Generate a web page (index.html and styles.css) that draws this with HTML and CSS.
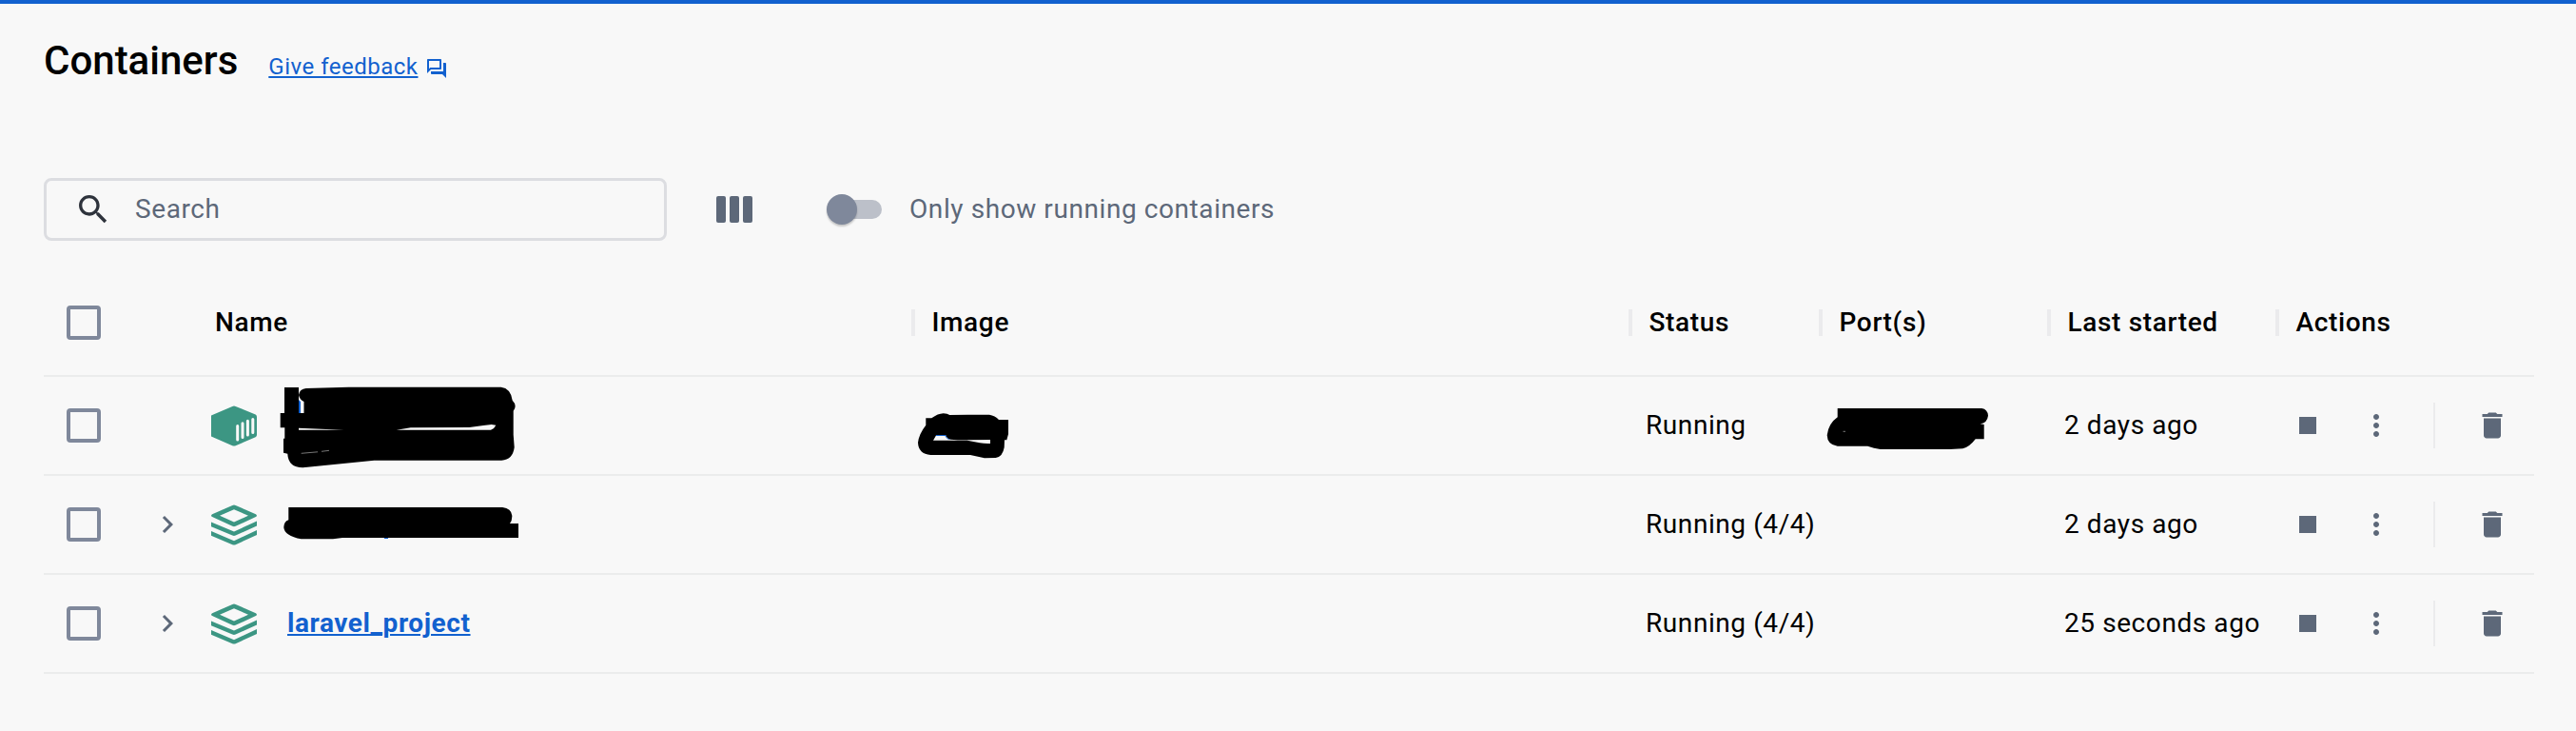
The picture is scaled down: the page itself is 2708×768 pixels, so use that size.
FILE: index.html
```html
<!DOCTYPE html>
<html lang="en">
<head>
    <meta charset="UTF-8">
    <title>Containers</title>
    <link rel="stylesheet" href="styles.css">
</head>
<body>

    <svg class="defs">
        <symbol id="stack" viewBox="0 0 48 43">
            <path fill-rule="evenodd" d="M22.3.9Q24 .1 25.7.9L46.9 10.3Q49 11.7 46.9 13.1L25.7 22.8Q24 23.6 22.3 22.8L1.1 13.1Q-1 11.7 1.1 10.3ZM24 5.2L9 11.7L24 18.6L39 11.7Z"/>
            <path d="M0 18.4L24 28.6L48 17.4V22.4L25.7 32.6Q24 33.4 22.3 32.6L0 23.2Z"/>
            <path d="M0 28L24 38.2L48 27V32L25.7 42.2Q24 43 22.3 42.2L0 32.8Z"/>
        </symbol>
        <symbol id="chevron" viewBox="0 0 24 24"><path d="M10 6 8.59 7.41 13.17 12l-4.58 4.59L10 18l6-6z"/></symbol>
        <symbol id="stop" viewBox="0 0 24 24"><path d="M6 6h12v12H6z"/></symbol>
        <symbol id="more" viewBox="0 0 24 24"><path d="M12 8c1.1 0 2-.9 2-2s-.9-2-2-2-2 .9-2 2 .9 2 2 2zm0 2c-1.1 0-2 .9-2 2s.9 2 2 2 2-.9 2-2-.9-2-2-2zm0 6c-1.1 0-2 .9-2 2s.9 2 2 2 2-.9 2-2-.9-2-2-2z"/></symbol>
        <symbol id="trash" viewBox="0 0 24 24"><path d="M6 19c0 1.1.9 2 2 2h8c1.1 0 2-.9 2-2V7H6v12zM19 4h-3.5l-1-1h-5l-1 1H5v2h14V4z"/></symbol>
    </svg>

    <div class="page">
        <div class="title">
            <h1>Containers</h1>
            <a class="feedback" href="#">Give feedback</a>
            <svg class="chat" viewBox="0 0 24 24"><path d="M15 4v7H5.17L4 12.17V4h11m1-2H3c-.55 0-1 .45-1 1v14l4-4h10c.55 0 1-.45 1-1V3c0-.55-.45-1-1-1zm5 4h-2v9H6v2c0 .55.45 1 1 1h11l4 4V7c0-.55-.45-1-1-1z"/></svg>
        </div>

        <div class="toolbar">
            <div class="search">
                <svg viewBox="0 0 24 24"><path d="M15.5 14h-.79l-.28-.27C15.41 12.59 16 11.11 16 9.5 16 5.91 13.09 3 9.5 3S3 5.91 3 9.5 5.91 16 9.5 16c1.61 0 3.09-.59 4.23-1.57l.27.28v.79l5 4.99L20.49 19l-4.99-5zm-6 0C7.01 14 5 11.99 5 9.5S7.01 5 9.5 5 14 7.01 14 9.5 11.99 14 9.5 14z"/></svg>
                <span>Search</span>
            </div>
            <div class="columns"><i></i><i></i><i></i></div>
            <div class="switch"><div class="thumb"></div></div>
            <span class="switch-label">Only show running containers</span>
        </div>

        <div class="table">
            <div class="row head">
                <div class="check"><div class="box"></div></div>
                <div></div>
                <div class="name">Name</div>
                <div class="th">Image</div>
                <div class="th">Status</div>
                <div class="th">Port(s)</div>
                <div class="th">Last started</div>
                <div class="th">Actions</div>
            </div>

            <div class="row">
                <div class="check"><div class="box"></div></div>
                <div></div>
                <div class="name">
                    <svg class="kind" viewBox="0 0 48 43">
                        <path d="M22.3.9Q24 .1 25.7.9L46.6 9.6Q48 10.3 48 12V31Q48 32.5 46.6 33.2L25.7 42.2Q24 43 22.3 42.2L0 32.5V10.5Z"/>
                        <path class="slats" d="M27.7 21.5V36M33 18.8V33.4M38.4 16.2V31M43.8 14.6V28.6"/>
                    </svg>
                    <svg class="ink ink-name" width="260" height="96">
                        <path fill-rule="evenodd" d="M9 7H24V15Q25 8.500 31.700 8L76.700 6.700H236.700Q247 8 248.700 20.700Q254 26 249.700 31.700V56.700L250.700 70Q249 83 237.300 83.700H103.300L28.300 91.300Q13 91 12.300 76.700L8 75.700V60.700H9.300V49.300H4.700V34H9ZM24 20V34H29.500V22Q25 20 24 15ZM24 49.700L71.700 51.700H24ZM126.700 51.700L141.700 49.300L203.300 49L226.700 46L231.300 46.700Q230 50 226 51.700Z"/>
                        <path class="blue" d="M24 20L26 22V34H24Z"/>
                        <path class="scratch" d="M26.700 76.300L44 74.800M48 74.300L56 73.300"/>
                    </svg>
                </div>
                <div>
                    <svg class="ink ink-image" width="104" height="56">
                        <path fill-rule="evenodd" d="M13.300 9.300H19.300Q26 4.500 31.700 4.300Q36 4.300 38.300 6L80 5.700Q86 6.500 90 11H100V26L98.300 32.300H96L95.700 40Q94 50 86.700 51L75 51.300L60 48H18.300Q5.500 47 5 35Q6 26 13.300 16.700ZM21 32.700L24.300 27H34Q36 31.500 39.300 31.700L46.700 32.300L81 32V36Q75 36.300 70 35.300L56.700 32.700Z"/>
                        <path class="blue" d="M24.300 27H34Q36 31.500 39.300 31.700H37Q34.500 30.500 33.500 28H23.800Z"/>
                    </svg>
                </div>
                <div>Running</div>
                <div>
                    <svg class="ink ink-ports" width="180" height="56">
                        <path d="M16.700 9H168.300Q174.500 10 175 16.700Q174 24.500 166.700 25.300L170.700 26V41.300H161.700Q155 50 148.300 51.300L135 52H61.700Q55 51 48.300 48.700H16.700Q6 47.500 5.700 37.300Q7 25 16.700 18.300Z"/>
                        <path class="scratch" d="M22.500 33.300H25"/>
                    </svg>
                </div>
                <div>2 days ago</div>
                <div class="actions">
                    <svg><use href="#stop"/></svg>
                    <svg><use href="#more"/></svg>
                    <svg class="delete"><use href="#trash"/></svg>
                </div>
            </div>

            <div class="row">
                <div class="check"><div class="box"></div></div>
                <div class="expand"><svg><use href="#chevron"/></svg></div>
                <div class="name">
                    <svg class="kind"><use href="#stack"/></svg>
                    <svg class="ink ink-group" width="260" height="42">
                        <path d="M13.300 3H238.300Q247.500 4 248.300 11.700Q248.500 16.500 246 20H255V35H70L60 36.300H26.700Q9 33 8.300 24Q8.500 18 13.300 16.300Z"/>
                        <path class="blue" d="M114 35h4v1h-4z"/>
                    </svg>
                </div>
                <div></div>
                <div>Running (4/4)</div>
                <div></div>
                <div>2 days ago</div>
                <div class="actions">
                    <svg><use href="#stop"/></svg>
                    <svg><use href="#more"/></svg>
                    <svg class="delete"><use href="#trash"/></svg>
                </div>
            </div>

            <div class="row">
                <div class="check"><div class="box"></div></div>
                <div class="expand"><svg><use href="#chevron"/></svg></div>
                <div class="name">
                    <svg class="kind"><use href="#stack"/></svg>
                    <a href="#">laravel_project</a>
                </div>
                <div></div>
                <div>Running (4/4)</div>
                <div></div>
                <div>25 seconds ago</div>
                <div class="actions">
                    <svg><use href="#stop"/></svg>
                    <svg><use href="#more"/></svg>
                    <svg class="delete"><use href="#trash"/></svg>
                </div>
            </div>
        </div>
    </div>

</body>
</html>
```
FILE: styles.css
```css
body {
    margin: 0;
    background: #f8f8f8;
    border-top: 4px solid #1261cf;
    font-family: Roboto, sans-serif;
    font-size: 28px;
    letter-spacing: 0.58px;
    line-height: 40px;
    color: #000;
}
a {
    color: #1261cf;
    text-underline-offset: 2px;
    text-decoration-thickness: 2px;
}
svg {
    display: block;
    flex: none;
}
.defs {
    position: absolute;
    width: 0;
    height: 0;
}
.page {
    padding: 0 44px 0 46px;
}

/* title */
.title {
    display: flex;
    align-items: baseline;
    height: 183px;
    padding-top: 32px;
    box-sizing: border-box;
}
h1 {
    margin: 0 32px 0 0;
    font-size: 42px;
    font-weight: 500;
    line-height: 56px;
    letter-spacing: 0;
}
.feedback {
    font-size: 24px;
    letter-spacing: 0.5px;
}
.chat {
    width: 24px;
    height: 24px;
    margin-left: 8px;
    align-self: flex-start;
    margin-top: 24px;
    fill: #1261cf;
}

/* search and filters */
.toolbar {
    display: flex;
    align-items: center;
    height: 66px;
    color: #5d6879;
}
.search {
    display: flex;
    align-items: center;
    box-sizing: border-box;
    width: 655px;
    height: 66px;
    padding-left: 29px;
    border: 3px solid #dcdde1;
    border-radius: 8px;
}
.search svg {
    width: 40px;
    height: 40px;
    margin-right: 24px;
    fill: #2e333c;
}
.columns {
    display: flex;
    gap: 4px;
    margin-left: 52px;
}
.columns i {
    width: 10px;
    height: 28px;
    border-radius: 2px;
    background: #5d6879;
}
.switch {
    width: 54px;
    height: 20px;
    margin-left: 82px;
    border-radius: 10px;
    background: #bcc0c9;
}
.thumb {
    width: 32px;
    height: 32px;
    margin: -6px 0 0 -4px;
    border-radius: 50%;
    background: #7f889b;
    box-shadow: 0 2px 2px rgba(0, 0, 0, 0.2);
}
.switch-label {
    margin-left: 29px;
}

/* table */
.table {
    width: 2618px;
    padding-top: 31px;
}
.row {
    display: grid;
    grid-template-columns: 112px 64px 736px 754px 200px 240px 240px 272px;
    align-items: center;
    height: 102px;
    border-bottom: 2px solid #ebecec;
}
.row > div {
    position: relative;
    padding-left: 18px;
    white-space: nowrap;
}
.row.head {
    height: 110px;
    font-weight: 500;
    letter-spacing: 0.65px;
}
.row .th {
    padding-left: 17.5px;
    border-left: 4px solid #ebebed;
    line-height: 28px;
}
.row .check {
    padding-left: 24px;
}
.row .name {
    display: flex;
    align-items: center;
    padding-left: 0;
    font-weight: 700;
}
.row.head .name {
    padding-left: 4px;
    font-weight: 500;
}
.row .expand {
    padding-left: 0;
}
.box {
    box-sizing: border-box;
    width: 36px;
    height: 36px;
    border: 4px solid #7f889b;
    border-radius: 4px;
}
.expand svg {
    width: 36px;
    height: 36px;
    fill: #5d6879;
}
.kind {
    width: 48px;
    height: 43px;
    margin: 0 32px -1px 0;
    fill: #3c9683;
}
.slats {
    fill: none;
    stroke: #f8f8f8;
    stroke-width: 3px;
    stroke-linecap: round;
}
.row .actions {
    display: flex;
    align-items: center;
    height: 48px;
    padding-left: 16px;
}
.actions svg {
    width: 36px;
    height: 36px;
    margin-right: 36px;
    fill: #5d6879;
}
.actions .delete {
    height: 36px;
    margin-right: 0;
    padding: 6px 0 6px 42px;
    margin-left: 6px;
    border-left: 2px solid #ebebed;
}

/* marker strokes over the hidden values */
.ink {
    position: absolute;
    fill: #000;
}
.ink .blue {
    fill: #1261cf;
}
.ink .scratch {
    stroke: #777;
    stroke-width: 1px;
}
.ink-name {
    left: 68px;
    top: -26px;
}
.ink-group {
    left: 68px;
    top: 0;
}
.ink-image {
    left: 2px;
    top: -17px;
}
.ink-ports {
    left: 3px;
    top: -27px;
}
```
